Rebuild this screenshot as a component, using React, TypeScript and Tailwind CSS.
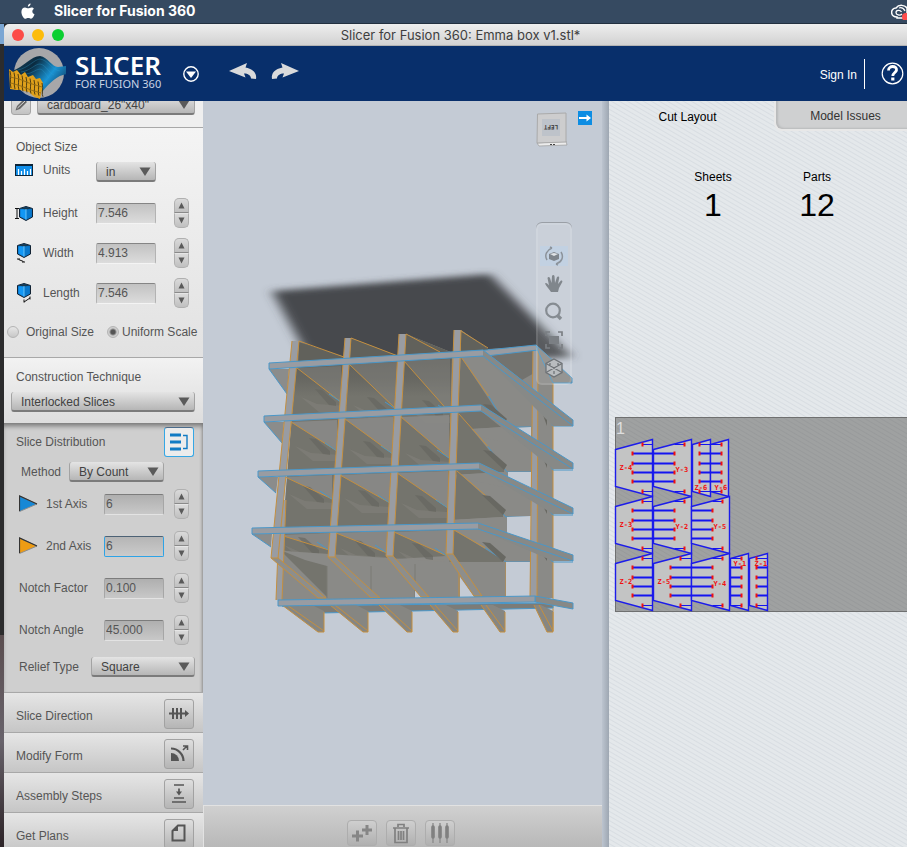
import React, { useState } from "react";

const FONT = "font-['Liberation_Sans',Arial,sans-serif]";

/* ---------- small controls ---------- */

function Stepper({ label, onStep }: { label: string; onStep: (d: number) => void }) {
  const btn =
    "flex h-[15px] w-[15px] items-center justify-center border border-[#b0b0b0] bg-linear-to-b from-[#dadada] to-[#c0c0c0]";
  return (
    <div className="flex flex-col">
      <button type="button" aria-label={`Increase ${label}`} onClick={() => onStep(1)} className={`${btn} rounded-t-[5px] border-b-[#8a8a8a]`}>
        <svg width="9" height="7" viewBox="0 0 9 7"><path d="M4.5 0.5 7.500 6.5H1.500z" fill="#5a5a5a" /></svg>
      </button>
      <button type="button" aria-label={`Decrease ${label}`} onClick={() => onStep(-1)} className={`${btn} rounded-b-[5px] border-t-[#e6e6e6]`}>
        <svg width="9" height="7" viewBox="0 0 9 7"><path d="M4.5 6.5 7.500 0.5H1.500z" fill="#5a5a5a" /></svg>
      </button>
    </div>
  );
}

function Drop({ id, value, options, width }: { id: string; value: string; options: string[]; width: string }) {
  return (
    <span className={`relative block ${width}`}>
      <select
        id={id}
        defaultValue={value}
        className="block h-5 w-full appearance-none rounded-[3px] border border-t-0 border-[#a3a3a3] border-b-2 border-b-[#7b7b7b] bg-linear-to-b from-[#e4e4e4] to-[#b6b6b6] pt-px pl-[9px] text-[12px] leading-4 text-[#424242] outline-none"
      >
        {options.map((o) => (
          <option key={o}>{o}</option>
        ))}
      </select>
      <svg className="pointer-events-none absolute top-[5px] right-[5px]" width="12" height="9" viewBox="0 0 12 9">
        <path d="M0.5 0.5h11L6 9z" fill="#5a5a5a" />
      </svg>
    </span>
  );
}

function NumberRow({
  id, label, initial, step, digits, icon, layout, dark, focused,
}: {
  id: string; label: string; initial: string; step: number; digits: number;
  icon?: React.ReactNode; layout: "size" | "slice"; dark?: boolean; focused?: boolean;
}) {
  const [v, setV] = useState(initial);
  const height = layout === "size" ? "h-10" : "h-[42px]";
  const labelCol = layout === "size" ? "w-[81px]" : "w-[89px]";
  return (
    <div className={`flex items-center ${height}`}>
      <label htmlFor={id} className={`flex items-center ${labelCol}`}>
        {icon && <span className={layout === "size" ? "w-[28px] shrink-0" : "w-[27px] shrink-0"}>{icon}</span>}
        <span className={icon ? "whitespace-nowrap" : "pl-1 whitespace-nowrap"}>{label}</span>
      </label>
      <input
        id={id}
        value={v}
        onChange={(e) => setV(e.target.value)}
        className={`h-[21px] w-[60px] rounded-[2px] border px-px text-[12px] leading-4 text-[#555] outline-none ${
          focused
            ? "border-[#2ea3e6] border-t-[#4d6275] bg-linear-to-b from-[#b5b5b5] to-[#cbcbcb]"
            : dark
              ? "border-[#a6a6a6] border-t-[#7c7c7c] border-b-[#e3e3e3] bg-linear-to-b from-[#afafaf] to-[#c8c8c8]"
              : "border-[#b3b3b3] border-t-[#858585] border-b-[#f4f4f4] bg-linear-to-b from-[#c2c2c2] to-[#dcdcdc]"
        }`}
      />
      <span className={layout === "size" ? "pl-[18px]" : "pl-[10px]"}>
        <Stepper label={label} onStep={(d) => setV((Number(v) + d * step).toFixed(digits))} />
      </span>
    </div>
  );
}

function IconButton({ label, active, children }: { label: string; active?: boolean; children: React.ReactNode }) {
  return (
    <button
      type="button"
      aria-label={label}
      className={`flex size-[30px] shrink-0 items-center justify-center rounded-[3px] border ${
        active ? "border-[#35a7e5] border-t-[#4b6c8c] bg-[#ececec]" : "border-[#a2a2a2] bg-linear-to-b from-[#dedede] to-[#b5b5b5]"
      }`}
    >
      {children}
    </button>
  );
}

/* ---------- sidebar icons ---------- */

function CubeIcon({ axis }: { axis: "h" | "w" | "l" }) {
  const dx = axis === "h" ? 4 : 2;
  const dy = axis === "h" ? 3 : 0;
  return (
    <svg width="18" height="20" viewBox="0 0 18 20">
      <g transform={`translate(${dx} ${dy})`}>
        <path d="M0.5 2.500 7 0.500l6.500 2v8.500L7 14.500 0.500 11z" fill="#0a6dbd" stroke="#123" strokeWidth="1" />
        <path d="M1.500 3.500 7 3v10.500L1.500 10.500z" fill="#1297f5" />
        <path d="M7 3l5.500 .5v7L7 13.500z" fill="#0878cc" />
        <path d="M1 2.500 7 1l6 1.500L7 3.500z" fill="#17384f" />
        <path d="M7 3v10.500" stroke="#7fd0ff" strokeWidth=".8" />
      </g>
      {axis === "h" && <path d="M0 5.500h4M0 15.500h4M2 5v10" stroke="#111" fill="none" />}
      {axis === "w" && <path d="M2 16h3M7 19h3M3.500 16.500l5 2" stroke="#111" fill="none" />}
      {axis === "l" && <path d="M9 19l6-4M9 16.500v3M15 13.500v3" stroke="#111" fill="none" />}
    </svg>
  );
}

const RulerIcon = () => (
  <svg width="18" height="13" viewBox="0 0 18 13">
    <rect width="18" height="12" fill="#0c2438" />
    <rect x="1" y="2" width="16" height="9" fill="#118fea" />
    <path d="M3.500 5v6M6.500 7v4M9.500 5v6M12.500 7v4M15.500 5v6" stroke="#fff" strokeWidth="1.200" />
  </svg>
);

const AxisIcon = ({ color }: { color: string }) => (
  <svg width="20" height="18" viewBox="0 0 20 18">
    <path d="M0.500 1 18 9 0.500 16.500z" fill={color} stroke="#8d8d8d" />
    <path d="M0.500 16V1L18 9" fill="none" stroke="#333" strokeWidth="1.200" />
  </svg>
);

/* ---------- 3D model ---------- */

const SLAT = "#999ca2";
const BLUE = "#4a97c8";
const ORANGE = "#c48f3f";
const LIGHT = "#8a8a87";
const DARK = "#74746d";

const slats = [
  { t: [292, 299, 341], b: [271, 278, 558], foot: [318, 326, 598] },
  { t: [345, 351, 338], b: [328, 335, 557], foot: [371, 380, 598] },
  { t: [399, 406, 334], b: [386, 393, 556], foot: [421, 429, 597] },
  { t: [454, 461, 330], b: [446, 453, 554], foot: [474, 482, 596] },
];

const cells: number[][] = [
  [297, 368, 341, 402], [349, 364, 397, 410], [404, 361, 450, 413],
  [291, 422, 337, 451], [345, 419, 393, 454], [401, 417, 449, 458],
  [285, 477, 332, 499], [340, 475, 390, 503], [397, 473, 448, 508],
  [280, 535, 329, 550], [336, 533, 387, 553], [394, 532, 447, 556],
];

const rails = [
  { l: [269, 363], r: [483, 350], e: [573, 420], u: [287, 394] },
  { l: [264, 416], r: [481, 405], e: [573, 463], u: [282, 443] },
  { l: [258, 471], r: [479, 463], e: [573, 508], u: [276, 493] },
  { l: [252, 528], r: [478, 523], e: [573, 555], u: [271, 547] },
];

const backCells: number[][] = [
  [461, 357, 507, 422, 427], [459, 414, 507, 468, 472], [457, 471, 506, 513, 517], [454, 530, 506, 560, 562],
];

const feet = [
  [282, 318, 324], [330, 363, 368], [379, 407, 412], [430, 453, 458], [481, 500, 505], [534, 547, 553],
];

function Model() {
  return (
    <svg className="block h-full w-full" viewBox="203 101 399 704" preserveAspectRatio="xMinYMin slice" role="img" aria-label="Sliced model preview">
      <defs>
        <filter id="soft" x="-20%" y="-30%" width="140%" height="160%"><feGaussianBlur stdDeviation="6 3" /></filter>
        <linearGradient id="inner" x1="0" y1="0" x2="0" y2="1">
          <stop offset="0" stopColor="#5f5f5a" /><stop offset=".12" stopColor="#686862" /><stop offset=".2" stopColor={DARK} />
        </linearGradient>
      </defs>
      <path d="M272 291 490 274 572 357 520 360 313 366z" fill="#474a4e" filter="url(#soft)" />

      {/* interior body */}
      <path d="M298 342 344 357 351 338 398 356 406 334 453 353 461 330 488 349 536 346 553 378V598L281 602 287 480z" fill={LIGHT} />
      <path d="M299 342 344 357V363L298 366zM351 338 398 356V360L350 362zM406 334 453 353V358L404 359zM461 331 488 349V352L461 355z" fill="#61615b" />
      <path d="M296 366 452 355 447 556 345 562 281 550z" fill="url(#inner)" />
      <path d="M486 352 536 348 536 372 522 380z" fill="#73736f" />

      {/* shelf undersides between the front slats */}
      {cells.map(([x1, y1, x2, y2], i) => (
        <g key={i}>
          <path d={`M${x1} ${y1} L${x2} ${y1 - 2} V${y2}z`} fill={LIGHT} opacity={i < 3 ? 0.4 : 0.9} />
          <path d={`M${x1 + 4} ${y2 - 5} l16 7 30 2 v6 h-28z`} fill="#8b8984" opacity=".35" />
          <path d={`M${x1 + 18} ${y2 - 13} l7 1 14 12 v4 l-7 -1z`} fill="#65655f" opacity=".65" />
          <path d={`M${x1} ${y1} L${x2} ${y2}`} stroke={ORANGE} fill="none" />
          <path d={`M${x2 - 12} ${y2 - 8} L${x2} ${y2}`} stroke={BLUE} />
        </g>
      ))}

      {/* cross pieces behind the last front slat */}
      {backCells.map(([x1, y1, x2, y2, y3], i) => (
        <g key={i}>
          <path d={`M${x1} ${y1} L${x2 - 3} ${y2} V${y3} L${x1 - 5} ${y3 + 3}z`} fill={i === 0 ? "#73736d" : DARK} />
          <path d={`M${x1} ${y1} L${x1 + (x2 - x1) * 0.6} ${y1 + (y2 - y1) * 0.6}`} stroke={ORANGE} fill="none" />
          <path d={`M${x1 + (x2 - x1) * 0.6} ${y1 + (y2 - y1) * 0.6} L${x2} ${y3} H532`} stroke={BLUE} fill="none" />
          <path d={`M${x2 - 24} ${y2 - 18} l8 1 16 14 -3 5z`} fill="#686862" />
          <path d={`M${x1 - 7} ${y3 + 3} L${x2 - 4} ${y3} V${y3 + 15} L${x1 - 6} ${y3 + 4}z`} fill={LIGHT} />
        </g>
      ))}

      {/* lower bay */}
      <path d="M284 551 447 562 506 562V598H281z" fill={LIGHT} />
      <path d="M280 550 305 560 327 566V597z" fill={DARK} />
      <path d="M327 566V598M371 566V598M415 564V598" stroke="#7a7a74" />
      <path d="M459 562V598M506 562V598" stroke={ORANGE} />

      {/* openings to the background */}
      <path d="M513 428 531 427V441zM508 472H531V490L508 477zM507 517 531 516V544L507 535zM506 562H530V597H506zM460 577 475 598H460zM415 588 422 598H415z" fill="#c4cbd5" />

      {/* rear uprights */}
      <path d="M538 350 553 378V598H537z" fill={LIGHT} />
      <path d="M538 350 545 361 553 383V631" fill="none" stroke={ORANGE} />
      <path d="M533 348H538L537 597H530z" fill={SLAT} stroke={ORANGE} />
      <path d="M539 404 547 426V416L540 402zM539 448 547 468V459zM539 498 547 514V506zM538 548 547 561V553z" fill="#686862" />
      <path d="M539 404 553 426H573M539 448 553 470H573M538 498 553 515H573M538 548 553 562H573" fill="none" stroke={BLUE} />
      <path d="M283 500 279 600" stroke={SLAT} strokeWidth="6" />
      <path d="M280 500 276 600M286 500 282 600" stroke={ORANGE} />

      {/* top rear rail */}
      <path d="M440 354 487 350 536 345 538 350 486 356z" fill={SLAT} stroke={BLUE} />
      <path d="M536 345 572 378V383H553L538 351z" fill={LIGHT} stroke={BLUE} />

      {/* horizontal rails */}
      {rails.map(({ l, r, e, u }, i) => (
        <g key={i}>
          <path d={`M${l[0]} ${l[1] + 6} h20 L${u[0]} ${u[1]}z`} fill="#8b8c8b" />
          <path d={`M${l[0]} ${l[1] + 6} L${u[0]} ${u[1]}`} stroke={BLUE} />
          <path d={`M${r[0]} ${r[1]} L${e[0]} ${e[1]} v6 H553 L${r[0]} ${r[1] + 6}z`} fill="#878987" />
          <path d={`M${r[0]} ${r[1]} L${e[0]} ${e[1]} v6 L${r[0]} ${r[1] + 6}`} fill="none" stroke={BLUE} />
        </g>
      ))}
      {slats.map(({ t, b }, i) => (
        <g key={i}>
          <path d={`M${t[0]} ${t[2]} H${t[1]} L${b[1]} ${b[2]} H${b[0]}z`} fill={SLAT} />
          <path d={`M${t[0]} ${t[2]} L${b[0]} ${b[2]} M${t[1]} ${t[2]} L${b[1]} ${b[2]}`} stroke={ORANGE} />
        </g>
      ))}
      <path d="M299 341 344 357M351 338 398 356M406 334 440 352M461 331 488 348" stroke={ORANGE} fill="none" />
      {rails.map(({ l, r }, i) => (
        <g key={i}>
          <path d={`M${l[0]} ${l[1]} L${r[0]} ${r[1]} v6 L${l[0]} ${l[1] + 6}z`} fill={SLAT} />
          <path d={`M${l[0]} ${l[1]} L${r[0]} ${r[1]} M${r[0]} ${r[1] + 6} L${l[0]} ${l[1] + 6} V${l[1]}`} fill="none" stroke={BLUE} />
        </g>
      ))}

      {/* diagonal slat ends, feet and base rail */}
      {slats.map(({ b, foot }, i) => (
        <path key={i} d={`M${b[0]} ${b[2]} H${b[1]} L${foot[1]} ${foot[2]} H${foot[0]}z`} fill="#8d8e8c" stroke={ORANGE} />
      ))}
      <path d="M282 606 553 603V608L320 613z" fill="#7c7c78" stroke={BLUE} />
      {feet.map(([x, a, c], i) => (
        <g key={i}>
          <path d={`M${x} 605 H${c - 12} L${c} 611 V632 H${a}z`} fill="#868682" />
          <path d={`M${x} 605 L${a} 632 H${c} V612 M${x + 5} 605 L${c} 631`} fill="none" stroke={ORANGE} />
        </g>
      ))}
      <path d="M535 596 573 603V609L535 602z" fill="#878987" stroke={BLUE} />
      <path d="M278 600 535 596V602L278 606z" fill={SLAT} stroke={BLUE} />
    </svg>
  );
}

/* ---------- cut sheet ---------- */

type Piece = { x: number; y: number; w: number; slope: number; from: number; to: number; edge?: number; side: "l" | "r"; label: string; lx: number; ly: number };

const pieces: Piece[] = [
  { x: 0, y: 0, w: 37, slope: 10, from: 17, to: 37, edge: 27, side: "l", label: "Z-4", lx: 4, ly: 30 },
  { x: 38, y: 0, w: 38, slope: 10, from: 0, to: 21, edge: 31, side: "r", label: "Y-3", lx: 60, ly: 32 },
  { x: 77, y: 0, w: 18, slope: 5, from: 7, to: 18, side: "l", label: "Z-6", lx: 79, ly: 50 },
  { x: 95, y: 0, w: 18, slope: 5, from: 0, to: 11, side: "r", label: "Y-6", lx: 99, ly: 50 },
  { x: 0, y: 57, w: 37, slope: 10, from: 17, to: 37, edge: 27, side: "l", label: "Z-3", lx: 4, ly: 87 },
  { x: 38, y: 57, w: 38, slope: 10, from: 0, to: 21, edge: 31, side: "r", label: "Y-2", lx: 60, ly: 89 },
  { x: 76, y: 57, w: 38, slope: 10, from: 0, to: 21, edge: 31, side: "r", label: "Y-5", lx: 98, ly: 89 },
  { x: 0, y: 114, w: 37, slope: 10, from: 17, to: 37, edge: 27, side: "l", label: "Z-2", lx: 4, ly: 144 },
  { x: 38, y: 114, w: 38, slope: 10, from: 17, to: 38, edge: 27, side: "l", label: "Z-5", lx: 42, ly: 144 },
  { x: 76, y: 114, w: 38, slope: 10, from: 0, to: 21, edge: 31, side: "r", label: "Y-4", lx: 98, ly: 146 },
  { x: 115, y: 114, w: 18, slope: 5, from: 0, to: 11, side: "r", label: "Y-1", lx: 118, ly: 126 },
  { x: 134, y: 114, w: 18, slope: 5, from: 7, to: 18, side: "l", label: "Z-1", lx: 139, ly: 126 },
];

const notches = [5, 14, 24, 33, 42, 52];

function CutSheet() {
  return (
    <svg width="154" height="172" viewBox="0.5 -0.5 154 172" className="block overflow-visible" role="img" aria-label="Part layout on sheet 1">
      {pieces.map((p) => (
        <path key={p.label} d={`M${p.x} ${p.y + p.slope} L${p.x + p.w} ${p.y} V${p.y + 57} L${p.x} ${p.y + 57 - p.slope}z`} fill="#c3c4c4" stroke="#1c1cea" strokeWidth="1.400" />
      ))}
      {pieces.map((p) => (
        <g key={p.label}>
          {notches.map((n, i) => {
            const short = i === 0 || i === 5;
            let a = p.from;
            let b = p.to;
            if (short && p.edge) {
              if (p.side === "l") a = p.edge;
              else {
                a = p.to;
                b = p.edge;
              }
            }
            const mark = p.side === "l" ? a : b;
            return (
              <g key={n}>
                <path d={`M${p.x + a} ${p.y + n} H${p.x + b}`} stroke="#1414f0" strokeWidth={short ? 1 : 2} />
                <rect x={p.x + mark - 1} y={p.y + n - 2} width="2" height="4" fill="#f01010" />
              </g>
            );
          })}
          <text x={p.lx} y={p.ly} fill="#f01010" className="font-['DejaVu_Sans_Mono',monospace] text-[7px] font-bold">{p.label}</text>
        </g>
      ))}
    </svg>
  );
}

/* ---------- page regions ---------- */

function Logo() {
  const ridges = Array.from({ length: 9 }, (_, i) => i);
  return (
    <svg width="62" height="53" viewBox="0 0 62 53" aria-hidden="true">
      <defs>
        <linearGradient id="wave" x1="0" y1="0" x2="1" y2=".5">
          <stop offset="0" stopColor="#17445e" /><stop offset=".4" stopColor="#0b2b40" /><stop offset=".75" stopColor="#1a94d4" /><stop offset="1" stopColor="#12517d" />
        </linearGradient>
      </defs>
      <circle cx="35" cy="26" r="25" fill="#a7a7a9" />
      <path d="M8 24C20 20 27 9 36 9c8 1 12 11 18 11l9-1c2 1 2 5 0 8-9 1-16 7-25 18-8-8-18-12-30-13z" fill="url(#wave)" />
      <path d="M14 23c10-2 17-11 22-11 8 1 12 11 20 12M17 25c9-1 14-8 19-8 6 1 9 9 14 11M21 27c7 0 11-5 15-5 4 1 6 6 9 9" fill="none" stroke="#319ed3" strokeWidth=".7" opacity=".45" />
      <path d="M5 22 9 25 13 23 17 28 21 25 24 30 29 28 32 32 36 31 39 36 38 43 36 52 31 50 28 48 25 45 20 44 16 43 12 43 6 42z" fill="#dfa01b" />
      {ridges.map((i) => (
        <path key={i} d={`M${6 + i * 4} ${24 + i * 1.5} c2 6 -1 11 1 ${17 - i * 0.4}`} fill="none" stroke="#3f3210" strokeWidth=".9" />
      ))}
      <path d="M6 30l9 2 10 4 13 4M7 36l10 3 10 4 10 3" stroke="#8a6412" strokeWidth=".8" fill="none" />
    </svg>
  );
}

function MenuBar() {
  return (
    <header className="flex h-6 shrink-0 items-center border-b border-[#22303f] bg-[#364a61] text-white">
      <svg className="ml-[21px]" width="14" height="17" viewBox="0 0 14 17" aria-hidden="true">
        <path d="M9.600 0.500c.1 1.400-1 3-2.700 3.200C6.700 2.200 8 .7 9.600.5zM12.900 5.700c-2.300 1.500-1.900 4.500.6 5.600-.6 1.800-2 4.400-3.500 4.400-1.100 0-1.400-.7-2.700-.7s-1.700.7-2.700.7C2.600 15.700.4 11.800.4 8.900c0-2.900 1.800-4.400 3.600-4.400 1.300 0 2.200.8 3.200.8.9 0 1.900-.9 3.400-.9.9 0 1.800.5 2.300 1.300z" fill="#fff" />
      </svg>
      <span className="ml-[19px] grow pb-0.5 font-['Inter',sans-serif] text-[14px] leading-5 font-bold">Slicer for Fusion 360</span>
      <svg width="16" height="16" viewBox="0 0 16 16" aria-label="Creative Cloud">
        <path d="M6 13C-1 13-1 4 5 4c3-4 9-3 11 0v10H6z" fill="none" stroke="#fff" strokeWidth="1.500" />
        <path d="M11 10c-2 2-6 1-6-1.500S9 5.500 10.500 8M8 4c3-1 5 1 6 3" fill="none" stroke="#fff" strokeWidth="1.300" />
        <circle cx="15" cy="13" r="4" fill="#ff4d4d" />
      </svg>
    </header>
  );
}

function TitleBar() {
  return (
    <div className="flex h-[22px] shrink-0 items-center border-b border-[#b3b3b3] bg-linear-to-b from-[#eeeeee] to-[#d2d2d2] pl-2">
      <div className="flex gap-2">
        <button type="button" aria-label="Close" className="size-3 rounded-full bg-[#fc4c48]" />
        <button type="button" aria-label="Minimize" className="size-3 rounded-full bg-[#fdbc0a]" />
        <button type="button" aria-label="Zoom" className="size-3 rounded-full bg-[#0bcf31]" />
      </div>
      <h1 className="grow pr-[50px] text-center font-['Inter',sans-serif] text-[13px] leading-4 text-[#3e3e3e]">
        Slicer for Fusion 360: Emma box v1.stl*
      </h1>
    </div>
  );
}

function AppHeader() {
  return (
    <div className="flex h-[55px] shrink-0 items-center bg-[#082f6b] text-white">
      <div className="flex items-center">
        <Logo />
        <div className="flex flex-col pb-[3px] pl-[9px] font-['Noto_Sans',sans-serif]">
          <span className="text-[26px] leading-6 font-semibold">SLICER</span>
          <span className="text-[11px] leading-[14px] whitespace-nowrap text-[#c9d3e4]">FOR FUSION 360</span>
        </div>
      </div>
      <button type="button" aria-label="Application menu" className="ml-[21px]">
        <svg width="18" height="18" viewBox="0 0 18 18">
          <circle cx="9" cy="9" r="7.200" fill="none" stroke="#fff" strokeWidth="1.400" /><path d="M4 6.500h10L9 13z" fill="#fff" />
        </svg>
      </button>
      <div className="ml-[29px] flex gap-[14px] pb-1">
        <button type="button" aria-label="Undo">
          <svg width="28" height="17" viewBox="0 0 28 17"><path d="M0 8 18 0 16.500 4.500C24 6 28 10 27 16l-5-.5c0-3-3-5-7-5l1.500 4z" fill="#d9dadb" /></svg>
        </button>
        <button type="button" aria-label="Redo">
          <svg width="28" height="17" viewBox="0 0 28 17"><path d="M28 8 10 0 11.500 4.500C4 6 0 10 1 16l5-.5c0-3 3-5 7-5l-1.500 4z" fill="#d9dadb" /></svg>
        </button>
      </div>
      <div className="ml-auto flex items-center pr-[3px]">
        <a href="#sign-in" className="pt-0.5 pr-[7px] text-[12px] leading-4">Sign In</a>
        <span className="mr-4 h-[30px] w-px bg-white" />
        <button type="button" aria-label="Help">
          <svg width="23" height="23" viewBox="0 0 23 23">
            <circle cx="11.500" cy="11.500" r="10.300" fill="none" stroke="#fff" strokeWidth="1.200" />
            <path d="M7.500 8.500c0-5.500 8.500-5 8-.5-.3 2.500-3.700 2.700-3.700 6" fill="none" stroke="#fff" strokeWidth="2.800" />
            <rect x="10.200" y="15.500" width="3.200" height="3" fill="#fff" />
          </svg>
        </button>
      </div>
    </div>
  );
}

function Sidebar() {
  const [scale, setScale] = useState("uniform");
  const seam = "border-b border-[#a8a8a8] shadow-[0_1px_0_#ffffff]";
  const radio =
    "size-3 appearance-none rounded-full border border-[#b4b4b4] bg-linear-to-b from-[#e6e6e6] to-[#c8c8c8] checked:bg-[radial-gradient(circle,#555_0_2px,#cfcfcf_4px)]";
  return (
    <aside className="flex w-[199px] shrink-0 flex-col overflow-hidden bg-[#ececec] text-[12px] leading-4 text-[#555]">
      <section className={`flex h-[27px] shrink-0 items-end gap-[6px] overflow-hidden bg-[#efefef] pb-3 pl-[7px] ${seam}`}>
        <button type="button" aria-label="Edit material" className="flex h-5 w-5 items-center justify-center rounded-[3px] border border-[#a5a5a5] bg-linear-to-b from-[#e4e4e4] to-[#c2c2c2]">
          <svg width="14" height="14" viewBox="0 0 14 14"><path d="M1.500 12.500 3 8l7-7 3 3-7 7z" fill="#666" /><path d="M3.500 10 11 3" stroke="#d8d8d8" /></svg>
        </button>
        <label htmlFor="material" className="sr-only">Material</label>
        <Drop id="material" width="w-[158px]" value={'cardboard_26"x40"'} options={['cardboard_26"x40"']} />
      </section>

      <section className={`shrink-0 bg-linear-to-b from-[#f4f4f4] to-[#e2e2e2] pt-2 pb-[7px] pl-[11px] ${seam}`}>
        <h2 className="pl-px leading-[22px]">Object Size</h2>
        <div className="flex h-[35px] items-start pt-1">
          <label htmlFor="units" className="flex w-[81px] items-center">
            <span className="w-[28px]"><RulerIcon /></span>Units
          </label>
          <Drop id="units" width="w-[60px]" value="in" options={["in", "cm", "mm"]} />
        </div>
        <NumberRow id="height" label="Height" initial="7.546" step={0.1} digits={3} layout="size" icon={<CubeIcon axis="h" />} />
        <NumberRow id="width" label="Width" initial="4.913" step={0.1} digits={3} layout="size" icon={<CubeIcon axis="w" />} />
        <NumberRow id="length" label="Length" initial="7.546" step={0.1} digits={3} layout="size" icon={<CubeIcon axis="l" />} />
        <div className="-ml-2 flex h-[37px] items-center whitespace-nowrap">
          <label className="flex items-center gap-[7px]">
            <input type="radio" name="scale" className={radio} checked={scale === "original"} onChange={() => setScale("original")} />Original Size
          </label>
          <label className="ml-[13px] flex items-center gap-[3px]">
            <input type="radio" name="scale" className={radio} checked={scale === "uniform"} onChange={() => setScale("uniform")} />Uniform Scale
          </label>
        </div>
      </section>

      <section className="shrink-0 bg-linear-to-b from-[#f2f2f2] to-[#dddddd] pt-[11px] pb-[11px] pl-[7px]">
        <label htmlFor="technique" className="block pl-[5px]">Construction Technique</label>
        <div className="pt-[7px]">
          <Drop id="technique" width="w-[184px]" value="Interlocked Slices" options={["Interlocked Slices", "Stacked Slices", "Curve", "Radial Slices"]} />
        </div>
      </section>

      <section className={`shrink-0 bg-[#cfcfcf] pb-[9px] pl-[11px] shadow-[inset_0_5px_5px_-2px_#777777,inset_-3px_0_3px_-2px_#999999] ${seam}`}>
        <div className="flex items-center justify-between pt-1 pr-[9px]">
          <h2 className="pl-px">Slice Distribution</h2>
          <IconButton label="Toggle slice distribution" active>
            <svg width="18" height="18" viewBox="0 0 18 18">
              <path d="M0 2h11M0 9h11M0 16h11" stroke="#117bc4" strokeWidth="3" /><path d="M13 2.500h4v13h-4" fill="none" stroke="#117bc4" strokeWidth="1.400" />
            </svg>
          </IconButton>
        </div>
        <div className="flex h-[30px] items-center pl-[6px]">
          <label htmlFor="method" className="w-[48px]">Method</label>
          <Drop id="method" width="w-[95px]" value="By Count" options={["By Count", "By Distance"]} />
        </div>
        <div className="-mt-1">
          <div className="[&_label]:pl-1"><NumberRow id="axis1" label="1st Axis" initial="6" step={1} digits={0} layout="slice" dark icon={<AxisIcon color="#1788d6" />} /></div>
          <div className="[&_label]:pl-1"><NumberRow id="axis2" label="2nd Axis" initial="6" step={1} digits={0} layout="slice" dark focused icon={<AxisIcon color="#ee9c14" />} /></div>
          <NumberRow id="notch-factor" label="Notch Factor" initial="0.100" step={0.1} digits={3} layout="slice" dark />
          <NumberRow id="notch-angle" label="Notch Angle" initial="45.000" step={1} digits={3} layout="slice" dark />
        </div>
        <div className="flex h-8 items-center pl-1">
          <label htmlFor="relief" className="w-[72px]">Relief Type</label>
          <Drop id="relief" width="w-[104px]" value="Square" options={["Square", "Horizontal", "Dogbone"]} />
        </div>
      </section>

      {[
        { label: "Slice Direction", icon: <g fill="none" stroke="#555" strokeWidth="2"><path d="M0 9.500h16M4 4v11M8 4v11M12 4v11" /><path d="M16 6v7l4-3.500z" fill="#555" stroke="none" /></g> },
        { label: "Modify Form", icon: <g><path d="M2 17V9a8 8 0 0 1 8 8z" fill="#555" /><path d="M2 4.500A12.500 12.500 0 0 1 14.500 17" fill="none" stroke="#555" strokeWidth="2.200" /><path d="M14 6l4-4M14 2h4.500v4" fill="none" stroke="#555" strokeWidth="1.600" /></g> },
        { label: "Assembly Steps", icon: <g fill="none" stroke="#555" strokeWidth="1.700"><path d="M5 1h10M10 4.500v4M5 14h10M3 18h14" /><path d="M7 7.500h6l-3 4z" fill="#555" stroke="none" /></g> },
        { label: "Get Plans", icon: <g><path d="M9 1.500h6.500v15h-12V7z" fill="none" stroke="#555" strokeWidth="2" /><path d="M9 1v6H3z" fill="#555" /></g> },
      ].map((row) => (
        <section key={row.label} className={`flex h-10 shrink-0 items-center justify-between bg-linear-to-b from-[#e6e6e6] to-[#c6c6c6] pt-0.5 pr-[9px] pl-3 ${seam}`}>
          <h2 className="pt-1">{row.label}</h2>
          <IconButton label={row.label}><svg width="20" height="19" viewBox="0 0 20 19">{row.icon}</svg></IconButton>
        </section>
      ))}
    </aside>
  );
}

function NavBar() {
  const tools = [
    { label: "Orbit", draw: <g><path d="M5 8l5-2 5 2v5l-5 2-5-2z" fill="#7d848c" /><path d="M6 8l4-1 4 1-4 2z" fill="#dfe3e7" /><path d="M8 2C3 4 0 9 3 14M12 18c6-2 8-7 5-12M8 2l-2-1M12 18l2 1" fill="none" stroke="#8c939b" strokeWidth="1.500" /></g> },
    { label: "Pan", draw: <path d="M7 18C5 15 2 12 1 9.500c1-1.500 2.500 0 4 2L3.500 4C4 2.500 5.500 3 6 4l1.500 5L8 2c.5-1.500 2-1.500 2.500 0L11 9l2-6c1-1 2.500-.5 2.200 1L14 10l2.500-3c1-1 2.300 0 1.800 1L15 14l-1 4z" fill="#80868c" /> },
    { label: "Zoom", draw: <g fill="none" stroke="#868c92"><circle cx="9" cy="8.500" r="6.800" strokeWidth="2.200" /><path d="M13.500 13.500 17 17" strokeWidth="3.400" /></g> },
    { label: "Fit", draw: <g><rect x="5" y="6" width="10" height="8" fill="#7b7f84" /><path d="M2 6V2h4M14 2h4v4M18 14v4h-4M6 18H2v-4" fill="none" stroke="#7b7f84" strokeWidth="1.700" /></g> },
    { label: "Perspective", draw: <g fill="none" stroke="#6f7377" strokeWidth="1.300"><path d="M10 1l8 4.500v9L10 19l-8-4.500v-9z" fill="#b9bcbf" /><path d="M2 5.500l16 9M18 5.500l-16 9M6 5v3M14 5v3M10 13v3" /></g> },
  ];
  return (
    <div className="absolute top-[122px] left-[333px] flex w-9 flex-col items-center gap-2 rounded-[6px] border-2 border-white/10 bg-white/10 pt-[21px] pb-[5px] shadow-[0_-1px_0_#9a9fa6]">
      {tools.map((t, i) => (
        <button key={t.label} type="button" aria-label={t.label} className={`flex items-center justify-center ${i === 0 ? "w-7 bg-[#bcd2e8]/60" : "w-7"}`}>
          <svg width="20" height="20" viewBox="0 0 20 20">{t.draw}</svg>
        </button>
      ))}
    </div>
  );
}

function Viewport() {
  const btn = "flex h-[26px] w-[30px] items-center justify-center rounded-t-[4px] rounded-b-[3px] border border-[#adadad] bg-linear-to-b from-[#cfcfcf] to-[#b0b0b0]";
  return (
    <main className="flex min-w-0 grow flex-col bg-[#c4cbd5]">
      <div className="relative min-h-0 grow overflow-hidden">
        <Model />
        <svg className="absolute top-[11px] left-[333px]" width="33" height="35" viewBox="0 0 33 35" role="img" aria-label="View cube">
          <path d="M1 31 3 34 31 33 30 29z" fill="#ececec" stroke="#999" strokeWidth=".7" />
          <path d="M1.500 2 30 1 30 30 1 31z" fill="#cdcdce" stroke="#aaa" />
          <rect x="6" y="7" width="18" height="17" fill="#bec3ca" />
          <text x="15" y="13" textAnchor="middle" transform="rotate(180 15 15)" dy="4" className="font-['DejaVu_Sans_Mono',monospace] text-[6px] font-bold" fill="#3d3d3d">LEFT</text>
          <path d="M14 32.500h2M17 32.500h2" stroke="#444" />
        </svg>
        <button type="button" aria-label="Collapse panel" className="absolute top-[10px] left-[375px] flex h-[14px] w-[14px] items-center justify-center bg-[#0d8de3]">
          <svg width="12" height="8" viewBox="0 0 12 8"><path d="M0 4h8" stroke="#fff" strokeWidth="2" /><path d="M7.500 .5 12 4 7.500 7.500z" fill="#fff" /></svg>
        </button>
        <NavBar />
      </div>
      <div className="flex h-[42px] shrink-0 items-end justify-center gap-[9px] border-t border-l border-[#e2e2e2] bg-linear-to-b from-[#d0d0d0] to-[#b8b8b8] pr-1 pb-px">
        <button type="button" aria-label="Add slices" className={btn}>
          <svg width="22" height="18" viewBox="0 0 22 18"><path d="M1 12h11M6.500 6.500v11M11 6h10M16 1v10" stroke="#868686" strokeWidth="3" /></svg>
        </button>
        <button type="button" aria-label="Delete slice" className={btn}>
          <svg width="18" height="21" viewBox="0 0 18 21"><path d="M1 5h16M6 4V1.500h6V4M3 5v14.500h12V5M6.500 8v9M9 8v9M11.500 8v9" fill="none" stroke="#808080" strokeWidth="1.700" /></svg>
        </button>
        <button type="button" aria-label="Dowels" className={btn}>
          <svg width="22" height="20" viewBox="0 0 22 20"><path d="M4 0v20M11 0v20M18 0v20" stroke="#8d8d8d" strokeWidth="1.400" /><path d="M4 4v10M11 4v10M18 4v10" stroke="#808080" strokeWidth="3.600" strokeLinecap="round" /></svg>
        </button>
      </div>
    </main>
  );
}

function ResultsPanel() {
  return (
    <section className="flex w-[298px] shrink-0 flex-col bg-[repeating-linear-gradient(30deg,#e4e8eb_0_2px,#d8dde2_3px,#e4e8eb_4px)]">
      <div role="tablist" className="flex text-[12px] leading-4">
        <button type="button" role="tab" aria-selected="true" className="w-[165px] pt-px pr-2 text-center text-black">Cut Layout</button>
        <button type="button" role="tab" aria-selected="false" className="h-[30px] grow rounded-bl-[8px] border-b-2 border-l-2 border-[#e8e8e8] bg-[#cfd0d1] pt-0.5 pl-2 text-[#333] shadow-[inset_2px_-1px_2px_#b9babb]">
          Model Issues
        </button>
      </div>
      <dl className="flex gap-[4px] pt-[38px] pl-[54px] text-center text-black">
        <div className="w-[100px]">
          <dt className="text-[12px] leading-4">Sheets</dt>
          <dd className="pt-1 text-[32px] leading-8">1</dd>
        </div>
        <div className="w-[100px]">
          <dt className="text-[12px] leading-4">Parts</dt>
          <dd className="pt-1 text-[32px] leading-8">12</dd>
        </div>
      </dl>
      <div className="mt-[196px] ml-[6px] border border-r-0 border-[#6f7070] bg-[repeating-linear-gradient(30deg,#9fa1a1_0_2px,#989a9b_3px,#9fa1a1_4px)]">
        <p className="text-[16px] leading-[21px] text-[#dedede]">1</p>
        <CutSheet />
      </div>
    </section>
  );
}

export default function App() {
  return (
    <div className={`flex h-screen flex-col overflow-hidden bg-[#202326] ${FONT}`}>
      <MenuBar />
      <div className="flex min-h-0 grow">
        <div className="flex w-1 shrink-0 flex-col bg-[#2c2c2d]">
          <div className="h-5 bg-[#7ba6d3]" />
          <div className="grow" />
          <div className="h-[212px] bg-linear-to-b from-[#5b4e50] via-[#68636b] to-[#2d2428]" />
        </div>
        <div className="flex min-w-0 grow flex-col overflow-hidden rounded-tl-[5px]">
          <TitleBar />
          <AppHeader />
          <div className="flex min-h-0 grow">
            <Sidebar />
            <Viewport />
            <div className="w-[7px] shrink-0 bg-linear-to-r from-[#bcc4cf] to-[#9ea7b2]" />
            <ResultsPanel />
          </div>
        </div>
      </div>
    </div>
  );
}
